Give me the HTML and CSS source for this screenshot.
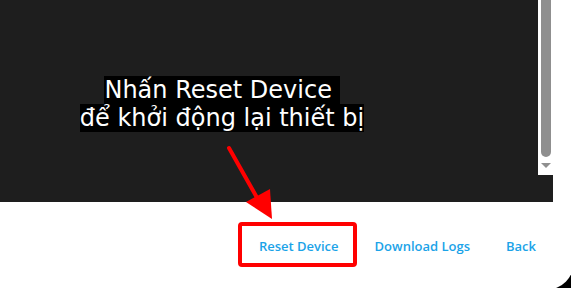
FILE: index.html
```html
<!DOCTYPE html>
<html lang="vi">

<head>
  <meta charset="UTF-8">
  <title>Reset Device</title>
  <link rel="stylesheet" href="styles.css">
</head>

<body>
  <div class="window">
    <div class="viewer">
      <div class="log-area"></div>
      <div class="scrollbar">
        <div class="thumb"></div>
        <div class="arrow-down"></div>
      </div>
    </div>
    <div class="actions">
      <button class="text-btn">Reset Device</button>
      <button class="text-btn">Download Logs</button>
      <button class="text-btn">Back</button>
    </div>

    <div class="note">
      <span class="note-line">Nhấn Reset Device&nbsp;</span><br>
      <span class="note-line">để khởi động lại thiết bị</span>
    </div>
    <svg class="pointer" width="571" height="288" viewBox="0 0 571 288">
      <line x1="229" y1="148" x2="260" y2="203" stroke="#ff0000" stroke-width="4" stroke-linecap="round" />
      <polygon points="246,202 270,189 272,219" fill="#ff0000" />
    </svg>
    <div class="highlight"></div>
  </div>
</body>

</html>
```

FILE: styles.css
```css
html,
body {
  margin: 0;
  background-color: #000;
  overflow: hidden;
}

.window {
  position: relative;
  width: 574px;
  height: 290px;
  background-color: #fff;
  border-bottom-right-radius: 28px;
}

.viewer {
  display: flex;
  width: 553px;
  height: 202px;
  background-color: #1e1e1e;
}

.log-area {
  flex: 1;
}

.scrollbar {
  width: 15px;
  height: 175px;
  background-color: #fff;
  position: relative;
}

.thumb {
  margin-left: 3px;
  width: 10px;
  height: 157px;
  background-color: #8f8f8f;
  border-radius: 0 0 5px 5px;
}

.arrow-down {
  margin: 6px 0 0 3px;
  width: 0;
  height: 0;
  border-left: 5px solid transparent;
  border-right: 5px solid transparent;
  border-top: 5px solid #8f8f8f;
}

.actions {
  display: flex;
  justify-content: flex-end;
  gap: 3px;
  width: 553px;
  padding-top: 26px;
}

.text-btn {
  min-width: 64px;
  height: 36px;
  padding: 0 16px;
  border: none;
  background: none;
  color: #1ba3e8;
  font-family: "Open Sans", sans-serif;
  font-weight: 600;
  font-size: 13px;
  cursor: pointer;
}

.text-btn:first-child {
  margin-right: 1px;
}

.note {
  position: absolute;
  left: 0;
  top: 76px;
  width: 444px;
  text-align: center;
  font-family: "DejaVu Sans", sans-serif;
  font-size: 24px;
  line-height: 28px;
  color: #fff;
}

.note-line {
  background-color: #000;
}

.pointer {
  position: absolute;
  left: 0;
  top: 0;
}

.highlight {
  position: absolute;
  left: 238px;
  top: 222px;
  width: 111px;
  height: 37px;
  border: 4px solid #ff0000;
  border-radius: 4px;
}
```
